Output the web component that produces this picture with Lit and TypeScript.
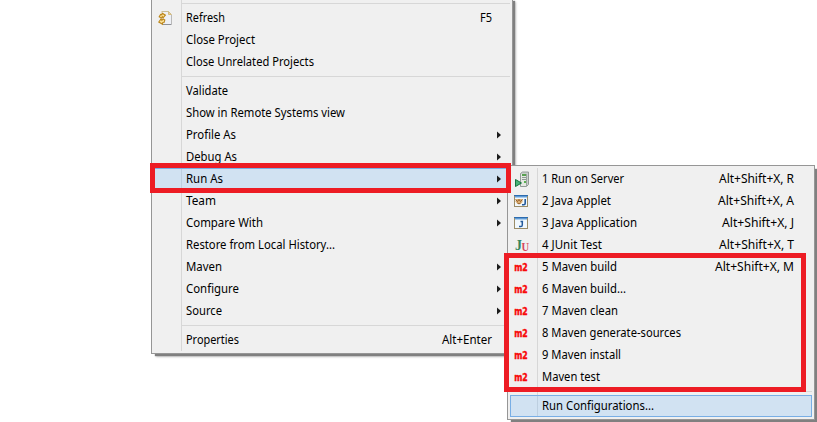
import { LitElement, html, svg, css, nothing } from "lit";
import { customElement, property } from "lit/decorators.js";

interface Entry {
  label?: string;
  /** advance width of the label in px */
  w?: number;
  keys?: string;
  kw?: number;
  icon?: string;
  sub?: boolean;
  selected?: boolean;
}

const SEP: Entry = {};

const MAIN: Entry[] = [
  SEP,
  { label: "Refresh", w: 39, keys: "F5", kw: 12, icon: "refresh" },
  { label: "Close Project", w: 69 },
  { label: "Close Unrelated Projects", w: 128 },
  SEP,
  { label: "Validate", w: 42 },
  { label: "Show in Remote Systems view", w: 159 },
  { label: "Profile As", w: 50, sub: true },
  { label: "Debug As", w: 51, sub: true },
  { label: "Run As", w: 37, sub: true, selected: true },
  { label: "Team", w: 30, sub: true },
  { label: "Compare With", w: 77, sub: true },
  { label: "Restore from Local History...", w: 149 },
  { label: "Maven", w: 36, sub: true },
  { label: "Configure", w: 53, sub: true },
  { label: "Source", w: 36, sub: true },
  SEP,
  { label: "Properties", w: 53, keys: "Alt+Enter", kw: 50 },
];

const RUN_AS: Entry[] = [
  { label: "1 Run on Server", w: 82, keys: "Alt+Shift+X, R", kw: 75, icon: "server" },
  { label: "2 Java Applet", w: 69, keys: "Alt+Shift+X, A", kw: 76, icon: "applet" },
  { label: "3 Java Application", w: 95, keys: "Alt+Shift+X, J", kw: 72, icon: "java" },
  { label: "4 JUnit Test", w: 60, keys: "Alt+Shift+X, T", kw: 75, icon: "junit" },
  { label: "5 Maven build", w: 75, keys: "Alt+Shift+X, M", kw: 79, icon: "m2" },
  { label: "6 Maven build...", w: 84, icon: "m2" },
  { label: "7 Maven clean", w: 76, icon: "m2" },
  { label: "8 Maven generate-sources", w: 139, icon: "m2" },
  { label: "9 Maven install", w: 79, icon: "m2" },
  { label: "Maven test", w: 58, icon: "m2" },
  SEP,
  { label: "Run Configurations...", w: 112, selected: true },
];

const WINDOW = svg`
  <rect x="1.5" y="2.5" width="13" height="11" fill="#f1f8fd" stroke="#9a8c68"/>
  <path d="M1 2.5h14" stroke="#2d6cae"/>
  <path d="M2 3.5h12" stroke="#5e9ad6"/>
  <path d="M2 4.5h12" stroke="#a9cdee"/>`;

const ICONS: Record<string, unknown> = {
  refresh: svg`
    <path d="M5.5 1.5h6l3 3v10h-9z" fill="#eef0f5"/>
    <path d="M4.5 1.5h7" stroke="#c9bd97"/>
    <path d="M6 14.5h8.5" stroke="#8f9197"/>
    <path d="M14.5 5v9.5" stroke="#b9b9b9"/>
    <path d="M11.5 1.5v3h3z" fill="#e9d59c" stroke="#cdb374" stroke-width=".8"/>
    <g fill="#fbe29b" stroke="#bb8519" stroke-width="1.1">
      <path d="M2.2 6.8l1.4-2.3 1.2.3.4-1.6 3.2 2-2.4 2.7-.7-1.2-1 1.4z"/>
      <path d="M7.8 10l-.8 2.6-1.5.2v1.5L1.8 12l2.2-3 .9 1.3 1.2-1.3z"/>
    </g>`,
  server: svg`
    <path d="M7.5 2.5l2-1.5h6v12.5l-2 2h-6z" fill="#c9cfcc" stroke="#8a918e" stroke-width=".9"/>
    <path d="M8 3h5v12H8z" fill="#e4e9e2"/>
    <path d="M13.5 3v12" stroke="#9ba39f"/>
    <rect x="9" y="3" width="4" height="2" fill="#58a050"/>
    <path d="M9 6.5h4M9 8.5h4" stroke="#8f9894"/>
    <rect x="11" y="10" width="2" height="2" fill="#5bae51"/>
    <path d="M2.5 8.5v7l6-3.5z" fill="#49b277" stroke="#18743f"/>`,
  applet: svg`${WINDOW}
    <path d="M3 6h6.5v3L7.5 11h-3L2.5 8.5z" fill="#dcae72"/>
    <path d="M2.5 6.5l2 2 1.5-2 1.5 2 2-2M4.5 10l1.5 1 1.5-1" fill="none" stroke="#92602f"/>
    <path d="M12.2 6v4.3q0 1.4-1.4 1.4H9" fill="none" stroke="#235a9c" stroke-width="1.6"/>`,
  java: svg`${WINDOW}
    <path d="M9.3 6v4q0 1.6-1.6 1.6H6M7.5 6.5h2.6" fill="none" stroke="#235a9c" stroke-width="1.5"/>`,
  junit: svg`
    <text x="2" y="12.6" class="ju" fill="#36865e" font-size="14">J</text>
    <text x="8.6" y="13.6" class="ju" fill="#d5485d" font-size="11.5" textLength="7.6" lengthAdjust="spacingAndGlyphs">U</text>`,
  m2: svg`<text x="1.2" y="11.8" class="m2" textLength="13.6" lengthAdjust="spacingAndGlyphs">m2</text>`,
};

@customElement("context-menu")
class ContextMenu extends LitElement {
  @property({ attribute: false }) entries: Entry[] = [];

  static styles = css`
    :host {
      display: block;
      box-sizing: border-box;
      border: 1px solid #969696;
      background: #f0f0f0;
      padding: 2px;
      box-shadow: 3px 3px 1px -1px #808080, 4px 4px 2px -1px #c4c4c4;
    }
    .rows {
      background: linear-gradient(#d7d7d7, #d7d7d7) var(--gutter) 0 / 1px 100% no-repeat;
    }
    .row {
      display: grid;
      grid-template-columns: var(--label) 1fr auto 18px;
      align-items: center;
      height: 22px;
      box-sizing: border-box;
    }
    .selected {
      background: linear-gradient(#bdcfe0, #bdcfe0) var(--gutter) 0 / 1px 100% no-repeat, #d1e2f2;
      box-shadow: inset 0 0 0 1px #78aee5;
    }
    .sep {
      height: 7px;
      box-sizing: border-box;
      margin-left: var(--gutter);
      padding-top: 3px;
    }
    .sep::before {
      content: "";
      display: block;
      height: 1px;
      background: #d7d7d7;
    }
    svg {
      display: block;
      overflow: visible;
    }
    .icon {
      margin-left: var(--icon);
    }
    .txt {
      font: 12px "Segoe UI", "Noto Sans", "Open Sans", sans-serif;
      fill: #000;
    }
    .ju {
      font-family: "Liberation Serif", serif;
      font-weight: bold;
    }
    .m2 {
      font: bold 9.6px "DejaVu Sans", sans-serif;
      fill: #f80808;
      stroke: #f80808;
      stroke-width: 0.4px;
      stroke-linejoin: round;
    }
    .arrow {
      margin-left: 5px;
    }
  `;

  private text(value: string, width: number) {
    return html`<svg width=${width} height="22">
      <text class="txt" x="0" y="15" textLength=${width} lengthAdjust="spacingAndGlyphs">${value}</text>
    </svg>`;
  }

  render() {
    return html`<div class="rows">
      ${this.entries.map((e) =>
        e.label
          ? html`<div class="row ${e.selected ? "selected" : ""}">
              <span>${e.icon ? html`<svg class="icon" width="16" height="16">${ICONS[e.icon]}</svg>` : nothing}</span>
              ${this.text(e.label, e.w!)}
              <span>${e.keys ? this.text(e.keys, e.kw!) : nothing}</span>
              ${e.sub
                ? html`<svg class="arrow" width="4" height="8"><path d="M0 0.5L4 4L0 7.5z" fill="#1c1c1c" /></svg>`
                : nothing}
            </div>`
          : html`<div class="sep"></div>`
      )}
    </div>`;
  }
}

@customElement("app-root")
class AppRoot extends LitElement {
  static styles = css`
    :host {
      display: block;
      position: relative;
      width: 817px;
      height: 422px;
      overflow: hidden;
      background: #fff;
    }
    .main,
    .sub,
    .mark {
      position: absolute;
      box-sizing: border-box;
    }
    .main {
      left: 151px;
      top: -3px;
      width: 362px;
      --gutter: 27px;
      --label: 32px;
      --icon: 3px;
    }
    .sub {
      left: 507px;
      top: 165px;
      width: 308px;
      --gutter: 27px;
      --label: 32px;
      --icon: 3px;
    }
    .mark {
      border: 5px solid #ed1c24;
    }
    .mark-run {
      left: 150px;
      top: 163px;
      width: 361px;
      height: 30px;
    }
    .mark-maven {
      left: 504px;
      top: 253px;
      width: 302px;
      height: 139px;
    }
  `;

  render() {
    return html`
      <context-menu class="main" .entries=${MAIN}></context-menu>
      <context-menu class="sub" .entries=${RUN_AS}></context-menu>
      <div class="mark mark-run"></div>
      <div class="mark mark-maven"></div>
    `;
  }
}
